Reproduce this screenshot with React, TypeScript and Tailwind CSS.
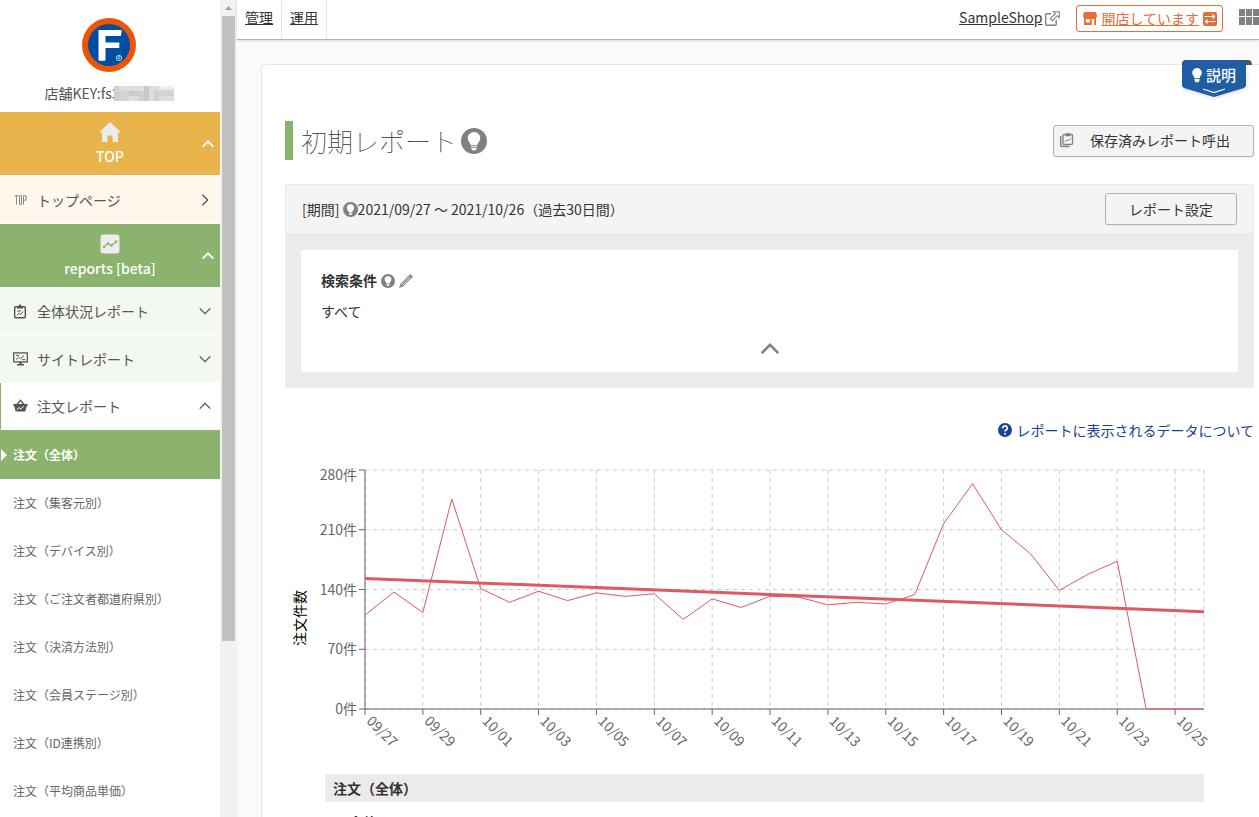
import type { ReactNode } from "react";

const counts = [
  110, 137, 113, 246, 141, 125, 138, 127, 136, 132, 135, 105, 129, 119, 132,
  131, 122, 125, 123, 134, 217, 264, 210, 182, 139, 158, 173, 0, 0, 0,
];
const dayLabels = [
  "09/27", "09/29", "10/01", "10/03", "10/05", "10/07", "10/09", "10/11",
  "10/13", "10/15", "10/17", "10/19", "10/21", "10/23", "10/25",
];
const yTicks = [0, 70, 140, 210, 280];

const orderReports = [
  "注文（集客元別）",
  "注文（デバイス別）",
  "注文（ご注文者都道府県別）",
  "注文（決済方法別）",
  "注文（会員ステージ別）",
  "注文（ID連携別）",
  "注文（平均商品単価）",
];

function Chevron({ dir, size = 14, width = 1.6 }: { dir: "up" | "down" | "right"; size?: number; width?: number }) {
  const d = dir === "up" ? "M2 11l6-6 6 6" : dir === "down" ? "M2 5l6 6 6-6" : "M5 2l6 6-6 6";
  return (
    <svg width={size} height={size} viewBox="0 0 16 16" fill="none" stroke="currentColor" strokeWidth={width} aria-hidden="true">
      <path d={d} />
    </svg>
  );
}

function BulbBadge({ size }: { size: number }) {
  return (
    <svg width={size} height={size} viewBox="0 0 26 26" className="inline-block shrink-0" aria-hidden="true">
      <circle cx="13" cy="13" r="13" fill="#808080" />
      <path d="M13 4a6.3 6.3 0 0 0-6.3 6.3c0 3 2.6 4.2 3.1 7h6.4c.5-2.8 3.1-4 3.1-7A6.3 6.3 0 0 0 13 4z" fill="#fff" />
      <path d="M10 18.2h6v1.1h-6zM10 20.1h6l-1.5 2.4h-3z" fill="#fff" />
    </svg>
  );
}

function ClipboardIcon() {
  return (
    <svg width="14" height="15" viewBox="0 0 14 15" fill="none" stroke="currentColor" aria-hidden="true">
      <rect x="1.7" y="2.7" width="10.6" height="11" rx="1" strokeWidth="1.4" />
      <path d="M4 2h1.600a1.400 1.400 0 0 1 2.800 0H10v2.500H4z" fill="currentColor" stroke="none" />
      <path d="M4 7h4M3.800 11.300l2-2 1.700 1.200 2.700-3" />
    </svg>
  );
}

function MonitorIcon() {
  return (
    <svg width="15" height="14" viewBox="0 0 15 14" fill="none" stroke="currentColor" aria-hidden="true">
      <rect x=".7" y=".9" width="13.600" height="9" strokeWidth="1.300" />
      <path d="M3 7.600l2.500-2.300 2 1.400 3.500-3M3 3.400h3M9 7.600h3" />
      <path d="M6.300 10h2.400v2H11v1.500H4V12h2.300z" fill="currentColor" stroke="none" />
    </svg>
  );
}

function BasketIcon() {
  return (
    <svg width="15" height="14" viewBox="0 0 15 14" fill="none" aria-hidden="true">
      <path d="M3.600 6L7.500 1.300 11.400 6" stroke="currentColor" strokeWidth="1.300" />
      <path d="M.5 5h14v2.200h-.8L12.300 12.600H2.700L1.300 7.200H.5z" fill="currentColor" />
      <path d="M3.800 10.600l2.200-2 1.800 1.300 3-2.700" stroke="#fff" />
    </svg>
  );
}

function SavedReportIcon() {
  return (
    <svg width="15" height="16" viewBox="0 0 15 16" fill="none" stroke="#808080" aria-hidden="true">
      <path d="M1.700 4v9.300a1.200 1.200 0 0 0 1.200 1.200h7.500" strokeWidth="1.500" />
      <rect x="4" y="2.500" width="9.500" height="10" rx="1" strokeWidth="1.300" />
      <path d="M6 1.700h1.400a1.400 1.400 0 0 1 2.700 0h1.400v2.500H6z" fill="#808080" stroke="none" />
      <path d="M5.800 9.800l2-2 1.500 1 2.400-2.400" />
    </svg>
  );
}

function ExternalLinkIcon() {
  return (
    <svg width="15" height="15" viewBox="0 0 15 15" fill="none" stroke="#808080" className="ml-[3px]" aria-hidden="true">
      <path d="M6 2.800H1.700a1 1 0 0 0-1 1v9.500a1 1 0 0 0 1 1h8.500a1 1 0 0 0 1-1V9" strokeWidth="1.400" />
      <path d="M8.300.700h6v6l-2-2-4.800 5-2.200-2.200 5-4.800z" strokeWidth="1.100" />
    </svg>
  );
}

function SectionHead({ icon, label, tone }: { icon: ReactNode; label: string; tone: string }) {
  return (
    <button className={`relative flex h-[63px] w-full shrink-0 flex-col items-center pt-2 text-white ${tone}`}>
      <span className="flex h-6 items-center">{icon}</span>
      <span className="h-6 text-sm leading-6 font-medium">{label}</span>
      <span className="absolute top-[25px] right-[5px]"><Chevron dir="up" width={2.400} /></span>
    </button>
  );
}

function NavRow({ icon, label, dir, tone }: { icon: ReactNode; label: string; dir: "up" | "down" | "right"; tone: string }) {
  return (
    <button className={`flex w-full shrink-0 items-center border-b border-white pr-2 text-sm text-[#555] ${tone}`}>
      <span className="flex w-6 shrink-0 items-center">{icon}</span>
      <span className="flex-1 text-left">{label}</span>
      <Chevron dir={dir} />
    </button>
  );
}

function Sidebar() {
  return (
    <aside className="flex w-[237px] shrink-0 overflow-hidden bg-[#f1f1f1]">
      <div className="flex w-[220px] shrink-0 flex-col bg-white">
        <div className="flex h-28 shrink-0 flex-col items-center pt-[18px] pr-0.5">
          <svg width="54" height="54" viewBox="0 0 54 54" role="img" aria-label="F">
            <circle cx="27" cy="27" r="27" fill="#eb5505" />
            <circle cx="27" cy="27" r="21" fill="#004ea2" />
            <path d="M16.500 12h23.300l-1 6H23.500v6.500h13.800V30H23.500v12l-1 .8h-5l-1-.8z" fill="#fff" />
            <circle cx="37" cy="40" r="2.700" fill="none" stroke="#dbe6f3" strokeWidth=".8" />
            <path d="M36.200 41.500v-3h1.200a.8.8 0 0 1 0 1.600h-1.200m1 0l1 1.400" fill="none" stroke="#dbe6f3" strokeWidth=".6" />
          </svg>
          <div className="mt-[11px] flex h-5 items-center text-sm leading-5 text-[#555]">
            <span>店舗KEY:fs3</span>
            <svg width="60" height="15" viewBox="0 0 60 15" className="-ml-1.5" aria-hidden="true">
              <rect width="60" height="15" fill="#dedede" />
              <rect width="5" height="15" fill="#d0d0d0" />
              <rect x="5" y="5" width="10" height="10" fill="#d4d4d4" />
              <rect x="15" y="5" width="10" height="5" fill="#cacaca" />
              <rect x="25" y="5" width="5" height="10" fill="#d0d0d0" />
              <rect x="30" width="5" height="15" fill="#cbc8c5" />
              <rect x="35" width="5" height="5" fill="#d8e0e6" />
              <rect x="40" y="5" width="5" height="10" fill="#d0d0d0" />
              <rect x="45" y="5" width="15" height="5" fill="#d2d2d2" />
              <rect x="45" width="15" height="3" fill="#f1f1f1" />
            </svg>
          </div>
        </div>
        <SectionHead
          tone="bg-[#eab44c]"
          label="TOP"
          icon={
            <svg width="22" height="20" viewBox="0 0 22 20" fill="#ececec" aria-hidden="true">
              <path d="M11 0l11 10.500h-3V20h-5.500v-6.500h-5V20H3v-9.500H0z" />
            </svg>
          }
        />
        <NavRow
          tone="border-t h-[49px] bg-[#fff6ec] pl-[13px]"
          label="トップページ"
          dir="right"
          icon={
            <svg width="14" height="10" viewBox="0 0 14 10" fill="none" stroke="#888" strokeWidth="1" aria-hidden="true">
              <path d="M1.500 .700h4M3.500 .700v8.800M6.500 .700h2v8.600H6.500zM10.500 9.500V.700h2.500v4.500h-2.500" />
            </svg>
          }
        />
        <SectionHead
          tone="bg-[#8bb36d]"
          label="reports [beta]"
          icon={
            <svg width="20" height="20" viewBox="0 0 20 20" aria-hidden="true">
              <rect x=".5" y=".5" width="19" height="19" rx="3" fill="#ececec" />
              <path d="M4 13l4-3.500 3.500 2L16 8" fill="none" stroke="#8bb36d" strokeWidth="1.200" />
              <g fill="#8bb36d"><circle cx="4" cy="13" r="1.200" /><circle cx="8" cy="9.500" r="1.200" /><circle cx="11.500" cy="11.500" r="1.200" /><circle cx="16" cy="7.500" r="1.200" /></g>
            </svg>
          }
        />
        <NavRow tone="h-12 border-t bg-[#f3f8f0] pl-[13px]" label="全体状況レポート" dir="down" icon={<ClipboardIcon />} />
        <NavRow tone="h-12 bg-[#f3f8f0] pl-[13px]" label="サイトレポート" dir="down" icon={<MonitorIcon />} />
        <NavRow tone="h-[47px] border-l border-l-[#8bb36d] bg-white pl-3" label="注文レポート" dir="up" icon={<BasketIcon />} />
        <a href="#all" className="flex h-[49px] shrink-0 items-center gap-1.5 bg-[#8bb36d] text-xs font-bold text-white">
          <svg width="7" height="12" viewBox="0 0 7 12" fill="#fff" aria-hidden="true"><path d="M1 0l6 6-6 6z" /></svg>
          注文（全体）
        </a>
        {orderReports.map((name) => (
          <a key={name} href="#report" className="flex h-12 shrink-0 items-center pl-[13px] text-xs text-[#666]">{name}</a>
        ))}
      </div>
      <div className="flex w-[17px] flex-col items-center" aria-hidden="true">
        <svg width="17" height="16" viewBox="0 0 17 16" fill="#a3a3a3" className="shrink-0"><path d="M5 10l3.500-4 3.500 4z" /></svg>
        <div className="h-[76.5%] w-[13px] bg-[#c1c1c1]" />
      </div>
    </aside>
  );
}

function Header() {
  return (
    <header className="z-10 flex h-10 shrink-0 items-start border-b border-[#b0b0b0] bg-white text-sm text-[#333] shadow">
      <a href="#manage" className="flex h-full items-center border-r border-[#e8e8e8] px-2 pb-1.5 underline">管理</a>
      <a href="#operate" className="flex h-full items-center border-r border-[#e8e8e8] px-2 pb-1.5 underline">運用</a>
      <div className="ml-auto flex items-center pt-[5px]">
        <a href="#shop" className="pb-1 underline">SampleShop</a>
        <ExternalLinkIcon />
        <a href="#status" className="ml-4 flex h-[27px] items-center gap-1 rounded-[3px] border border-[#e96c36] pr-[5px] pl-1.5 text-[#e96c36] underline">
          <svg width="14" height="13" viewBox="0 0 14 13" fill="currentColor" aria-hidden="true">
            <path d="M1 0h12l1 4v1.200h-1V13h-1.800V7H8.700v6H1V5.200H0V4zM2.800 7v3.500h4V7z" fillRule="evenodd" />
          </svg>
          <span className="pb-0.5">開店しています</span>
          <svg width="14" height="14" viewBox="0 0 14 14" aria-hidden="true">
            <rect width="14" height="14" rx="2" fill="currentColor" />
            <path d="M1.500 4.500h10M9.500 2.500l2 2-2 2M12.500 9.500h-10M4.500 7.500l-2 2 2 2" fill="none" stroke="#fff" strokeWidth="1.200" />
          </svg>
        </a>
        <svg width="20" height="16" viewBox="0 0 20 16" fill="#808080" className="mb-1 ml-4" aria-label="メニュー">
          <path d="M0 0h6v7H0zM7 0h6v7H7zM14 0h6v7h-6zM0 8h6v8H0zM7 8h6v8H7zM14 8h6v8h-6z" />
        </svg>
      </div>
    </header>
  );
}

function OrderChart() {
  const left = 80, right = 919, top = 10, bottom = 249;
  const x = (i: number) => left + ((right - left) * i) / (counts.length - 1);
  const y = (v: number) => bottom - ((bottom - top) * v) / 280;
  return (
    <svg viewBox="0 0 969 314" className="block h-auto w-full text-sm" role="img" aria-label="注文件数">
      <g stroke="#ccc" strokeDasharray="4 4">
        {yTicks.map((v) => <line key={v} x1={left} x2={right} y1={y(v)} y2={y(v)} />)}
        {dayLabels.map((d, i) => <line key={d} x1={x(i * 2)} x2={x(i * 2)} y1={top} y2={bottom} />)}
        <line x1={right} x2={right} y1={top} y2={bottom} />
      </g>
      <g stroke="#666">
        <line x1={left} x2={left} y1={top} y2={bottom} />
        <line x1={left} x2={right} y1={bottom} y2={bottom} />
        {yTicks.map((v) => <line key={v} x1={left - 6} x2={left} y1={y(v)} y2={y(v)} />)}
        {dayLabels.map((d, i) => <line key={d} x1={x(i * 2)} x2={x(i * 2)} y1={bottom} y2={bottom + 6} />)}
      </g>
      <g fill="#666">
        {yTicks.map((v) => (
          <text key={v} x={left - 8} y={v === 280 ? top + 10 : y(v) + 5} textAnchor="end">{`${v}件`}</text>
        ))}
        {dayLabels.map((d, i) => (
          <text key={d} x={x(i * 2) + 4} y={bottom + 11} transform={`rotate(45 ${x(i * 2)} ${bottom + 8})`}>{d}</text>
        ))}
      </g>
      <text x="15" y="158" dy="5" textAnchor="middle" fill="#000" transform="rotate(-90 15 158)">注文件数</text>
      <polyline points={counts.map((c, i) => `${x(i)},${y(c)}`).join(" ")} fill="none" stroke="#de5960" />
      <line x1={left} x2={right} y1={y(153)} y2={y(114)} stroke="#de5960" strokeWidth="3" />
    </svg>
  );
}

export default function App() {
  return (
    <div className="flex h-screen overflow-hidden bg-[#fafafa] font-['Noto_Sans_CJK_JP','Noto_Sans',sans-serif] text-[#333]">
      <Sidebar />
      <div className="flex min-w-0 flex-1 flex-col">
        <Header />
        <main className="relative mt-6 ml-6 min-h-0 flex-1 rounded-tl border-t border-l border-[#e8e8e8] bg-white pr-[5px] pl-[23px]">
          <div className="absolute -top-[5px] right-[7px]">
            <svg width="70" height="42" viewBox="0 0 70 42" aria-hidden="true" className="block">
              <path d="M64 0h2q4 0 4 5h-6z" fill="#555" />
              <path d="M4 0H64V25q0 2-2 3L32 37 2 28q-2-1-2-3V4q0-4 4-4z" fill="#205da3" className="drop-shadow-sm" />
              <path d="M21 29l11 3.500L43 29" fill="none" stroke="#fff" strokeWidth="1.200" />
              <path d="M15 8a4.800 4.800 0 0 0-4.800 4.800c0 2.200 1.700 3 2.100 5.200h5.400c.4-2.200 2.100-3 2.100-5.200A4.800 4.800 0 0 0 15 8zM12.500 18.800h5v1.500l-1 2h-3l-1-2z" fill="#fff" />
            </svg>
            <button className="absolute top-[3px] left-6 h-6 text-[15px] leading-6 font-medium text-white">説明</button>
          </div>

          <div className="mt-14 flex items-center justify-between">
            <h1 className="flex h-[39px] items-center gap-1 border-l-8 border-[#8bb36d] pl-2 text-[26px] leading-[39px] font-thin">
              初期レポート
              <BulbBadge size={26} />
            </h1>
            <button className="flex h-8 items-center gap-4 rounded-[3px] border border-[#b3b3b3] bg-[#f4f4f4] pr-[23px] pb-0.5 pl-[5px] text-sm shadow-xs">
              <SavedReportIcon />
              保存済みレポート呼出
            </button>
          </div>

          <section className="mt-6 bg-[#ebebeb]">
            <div className="flex h-[50px] items-center justify-between border border-[#ebebeb] bg-[#f4f4f4] px-4 text-sm">
              <p className="flex items-center">
                [期間]&nbsp;<BulbBadge size={15} />2021/09/27 ～ 2021/10/26（過去30日間）
              </p>
              <button className="h-8 rounded-[3px] border border-[#b3b3b3] px-[23px] shadow-xs">レポート設定</button>
            </div>
            <div className="p-4">
              <div className="flex h-[122px] flex-col bg-white px-5 pt-5 text-sm leading-[21px]">
                <h2 className="flex items-center gap-1 font-bold">
                  検索条件
                  <BulbBadge size={14} />
                  <svg width="14" height="14" viewBox="0 0 14 14" aria-hidden="true">
                    <path d="M10.800 .500q.6-.6 1.200 0l1.500 1.500q.6.600 0 1.200L4.200 12.500 0 14l1.500-4.200z" fill="#8a8a8a" />
                    <path d="M2.600 10.400l7.800-7.800M3.700 11.500l7.800-7.800" stroke="#fff" strokeWidth=".6" />
                  </svg>
                </h2>
                <p className="mt-2.5">すべて</p>
                <button aria-label="閉じる" className="mt-4 self-center text-[#808080]">
                  <Chevron dir="up" size={22} width={1.800} />
                </button>
              </div>
            </div>
          </section>

          <p className="mt-8 flex h-5 justify-end text-sm leading-5">
            <a href="#about" className="flex items-center gap-1 text-[#1a4394]">
              <svg width="14" height="14" viewBox="0 0 14 14" aria-hidden="true">
                <circle cx="7" cy="7" r="7" fill="currentColor" />
                <path d="M4.700 5.300A2.300 2.100 0 1 1 7.800 7q-.8.500-.8 1.400" fill="none" stroke="#fff" strokeWidth="1.600" />
                <circle cx="7" cy="10.700" r="1" fill="#fff" />
              </svg>
              レポートに表示されるデータについて
            </a>
          </p>
          <div className="mt-5"><OrderChart /></div>
          <div className="mr-[50px] ml-10">
            <h2 className="h-7 bg-[#ebebeb] pl-2 text-sm leading-7 font-bold">注文（全体）</h2>
            <p className="mt-2.5 pl-6 text-sm font-bold">全体</p>
          </div>
        </main>
      </div>
    </div>
  );
}
